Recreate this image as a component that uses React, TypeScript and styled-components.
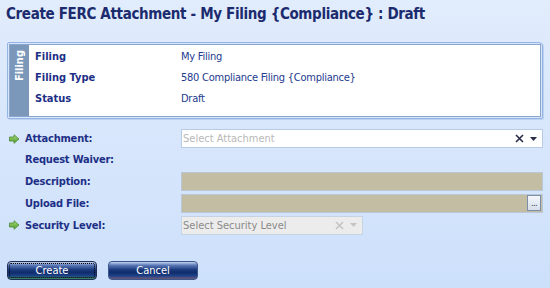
import React from "react";
import styled, { createGlobalStyle } from "styled-components";

const Global = createGlobalStyle`
  html, body { margin: 0; padding: 0; }
  body { font-family: "DejaVu Sans", sans-serif; }
`;

const Page = styled.div`
  width: 550px;
  height: 288px;
  box-sizing: border-box;
  background: linear-gradient(#e1ecfc, #cde0fb);
  padding: 4px 7px 0 7px;
  display: flex;
  flex-direction: column;
`;

const Title = styled.h1`
  margin: 0 0 0 -1px;
  font-family: "DejaVu Sans Condensed", "DejaVu Sans", sans-serif;
  font-weight: bold;
  font-size: 15px;
  letter-spacing: -0.35px;
  line-height: 20px;
  color: #1b2b6e;
  height: 38px;
`;

const Panel = styled.div`
  border: 1px solid #94b4e4;
  border-radius: 2px 4px 2px 2px;
  padding: 1px;
  background: #d8e6fb;
  height: 77px;
  box-sizing: border-box;
  box-shadow: 1px 1px 0 #bcd2f2;
`;

const PanelInner = styled.div`
  border: 1px solid #8aa6cc;
  background: #fff;
  height: 100%;
  box-sizing: border-box;
  display: flex;
`;

const Tab = styled.div`
  width: 19px;
  background: #7b97b9;
  display: flex;
  align-items: flex-start;
  justify-content: center;
`;

const TabText = styled.span`
  writing-mode: vertical-rl;
  transform: rotate(180deg);
  color: #fff;
  font-family: "DejaVu Sans Condensed", "DejaVu Sans", sans-serif;
  font-weight: bold;
  font-size: 11px;
  padding-bottom: 5px;
`;

const InfoGrid = styled.div`
  display: grid;
  grid-template-columns: 146px 1fr;
  grid-auto-rows: 21px;
  padding: 1px 0 0 6px;
  align-items: center;
`;

const InfoLabel = styled.div`
  font-family: "DejaVu Sans Condensed", "DejaVu Sans", sans-serif;
  font-weight: bold;
  font-size: 11px;
  color: #1d2f86;
`;

const InfoValue = styled.div`
  font-family: "DejaVu Sans Condensed", "DejaVu Sans", sans-serif;
  font-size: 11px;
  letter-spacing: -0.25px;
  color: #1d3a8f;
`;

const Form = styled.div`
  display: grid;
  grid-template-columns: 18px 156px 1fr;
  grid-template-rows: 21px 21px 22px 22px 22px;
  align-items: center;
  margin-top: 9px;
`;

const Marker = styled.div`
  display: flex;
  align-items: center;
  padding-left: 2px;
`;

const Label = styled.div`
  font-family: "DejaVu Sans Condensed", "DejaVu Sans", sans-serif;
  font-weight: bold;
  font-size: 11px;
  letter-spacing: -0.2px;
  color: #1d2f86;
`;

const Combo = styled.div<{ $disabled?: boolean; $width?: string }>`
  height: 19px;
  box-sizing: border-box;
  width: ${(p) => p.$width || "100%"};
  border: 1px solid ${(p) => (p.$disabled ? "#c6d3e3" : "#b7cbe6")};
  background: ${(p) => (p.$disabled ? "#ececec" : "#fff")};
  display: flex;
  align-items: center;
  padding-left: 1px;
`;

const Placeholder = styled.span<{ $disabled?: boolean }>`
  flex: 1;
  font-family: "DejaVu Sans Condensed", "DejaVu Sans", sans-serif;
  font-size: 11px;
  color: ${(p) => (p.$disabled ? "#8a8a8a" : "#b8b8b8")};
`;

const ComboIcons = styled.span`
  display: flex;
  align-items: center;
  gap: 6px;
  padding-right: 5px;
`;

const Field = styled.div`
  height: 19px;
  box-sizing: border-box;
  background: #c2bda3;
  border: 1px solid #b9c7d6;
  display: flex;
  justify-content: flex-end;
  align-items: center;
`;

const DotsButton = styled.div`
  width: 14px;
  height: 16px;
  margin-right: 1px;
  box-sizing: border-box;
  border: 1px solid #7d8fa8;
  background: linear-gradient(#f4f7fb, #d6dfeb);
  font-family: "DejaVu Sans", sans-serif;
  font-size: 8px;
  line-height: 16px;
  text-align: center;
  color: #333;
  letter-spacing: -0.5px;
`;

const Buttons = styled.div`
  display: flex;
  gap: 11px;
  margin-top: 25px;
`;

const Button = styled.button<{ $focused?: boolean }>`
  width: 90px;
  height: 19px;
  border-radius: 4px;
  border: 1px solid ${(p) => (p.$focused ? "#1d2d55" : "#3d5689")};
  outline: ${(p) => (p.$focused ? "1px dotted #000" : "none")};
  outline-offset: -3px;
  background: linear-gradient(
    #c2d3ee 0%,
    #5876b5 20%,
    #1c3b7e 45%,
    #0f2c6b 60%,
    #1b3f86 80%,
    ${(p) => (p.$focused ? "#3e8a62" : "#6c5a7a")} 100%
  );
  color: #fff;
  font-family: "DejaVu Sans Condensed", "DejaVu Sans", sans-serif;
  font-size: 11px;
  padding: 0;
  cursor: pointer;
`;

const Arrow = () => (
  <svg width="11" height="10" viewBox="0 0 11 10">
    <defs>
      <linearGradient id="ga" x1="0" y1="0" x2="0" y2="1">
        <stop offset="0" stopColor="#a9dc7c" />
        <stop offset="1" stopColor="#4d9a2c" />
      </linearGradient>
    </defs>
    <path d="M0.5 3 H5 V0.7 L10 5 L5 9.3 V7 H0.5 Z" fill="url(#ga)" stroke="#4a8a34" strokeWidth="0.8" />
  </svg>
);

const XIcon = ({ color }: { color: string }) => (
  <svg width="9" height="9" viewBox="0 0 9 9">
    <path d="M1 1 L8 8 M8 1 L1 8" stroke={color} strokeWidth="1.6" />
  </svg>
);

const Down = ({ color }: { color: string }) => (
  <svg width="7" height="4" viewBox="0 0 7 4">
    <path d="M0 0 H7 L3.5 4 Z" fill={color} />
  </svg>
);

export default function App() {
  return (
    <>
      <Global />
      <Page>
        <Title>Create FERC Attachment - My Filing {"{Compliance}"} : Draft</Title>
        <Panel>
          <PanelInner>
            <Tab>
              <TabText>Filing</TabText>
            </Tab>
            <InfoGrid>
              <InfoLabel>Filing</InfoLabel>
              <InfoValue>My Filing</InfoValue>
              <InfoLabel>Filing Type</InfoLabel>
              <InfoValue>580 Compliance Filing {"{Compliance}"}</InfoValue>
              <InfoLabel>Status</InfoLabel>
              <InfoValue>Draft</InfoValue>
            </InfoGrid>
          </PanelInner>
        </Panel>
        <Form>
          <Marker><Arrow /></Marker>
          <Label>Attachment:</Label>
          <Combo>
            <Placeholder>Select Attachment</Placeholder>
            <ComboIcons>
              <XIcon color="#2a2a4a" />
              <Down color="#2a2a4a" />
            </ComboIcons>
          </Combo>

          <Marker />
          <Label>Request Waiver:</Label>
          <div />

          <Marker />
          <Label>Description:</Label>
          <Field />

          <Marker />
          <Label>Upload File:</Label>
          <Field>
            <DotsButton>...</DotsButton>
          </Field>

          <Marker><Arrow /></Marker>
          <Label>Security Level:</Label>
          <Combo $disabled $width="182px">
            <Placeholder $disabled>Select Security Level</Placeholder>
            <ComboIcons>
              <XIcon color="#c4c4c4" />
              <Down color="#c4c4c4" />
            </ComboIcons>
          </Combo>
        </Form>
        <Buttons>
          <Button $focused>Create</Button>
          <Button>Cancel</Button>
        </Buttons>
      </Page>
    </>
  );
}
